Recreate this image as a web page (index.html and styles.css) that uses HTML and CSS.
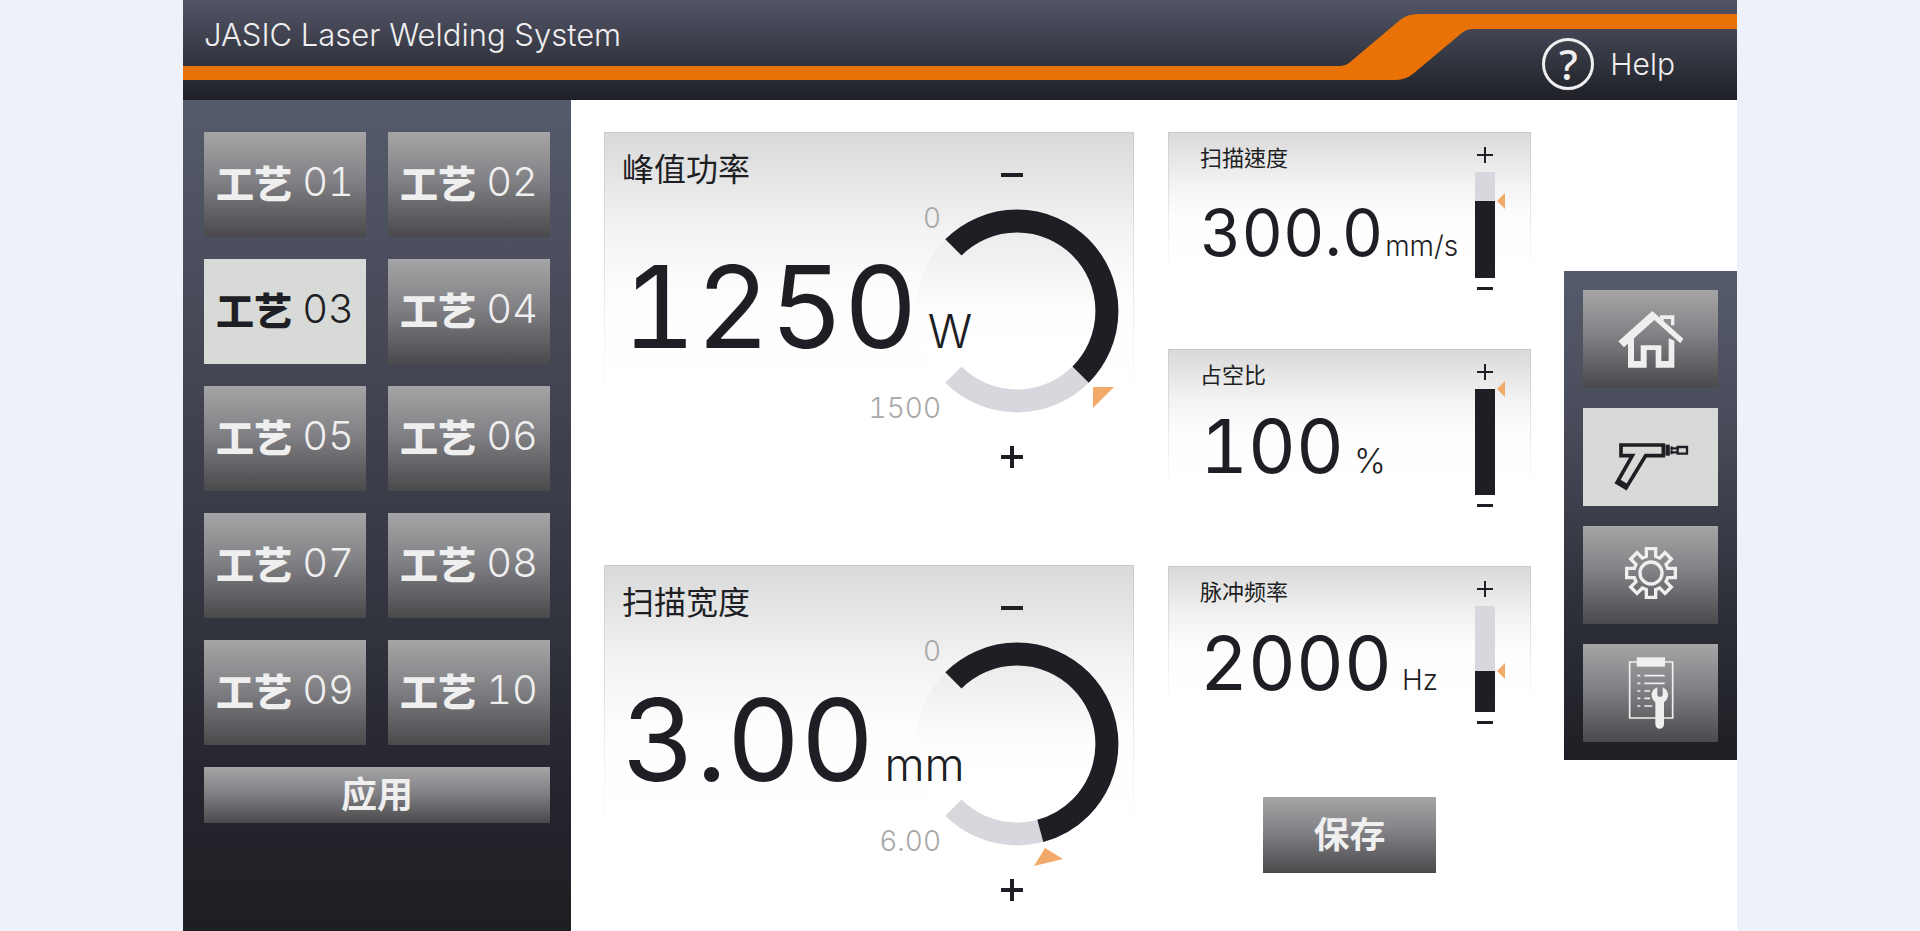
FILE: index.html
```html
<!DOCTYPE html>
<html lang="zh-CN">
<head>
    <meta charset="UTF-8">
    <title>JASIC Laser Welding System</title>
    <link rel="stylesheet" href="styles.css">
</head>
<body>
    <div class="screen">
        <header class="header">
            <svg class="ribbon" viewBox="0 0 1554 100" preserveAspectRatio="xMaxYMid slice" aria-hidden="true">
                <path d="M0 66H1158Q1162 66 1166 63L1217 20Q1224 14 1235 14H1554V29H1289Q1284 29 1280 32L1231 73Q1223 80 1213 80H0Z" fill="#e87205"/>
            </svg>
            <h1>JASIC Laser Welding System</h1>
            <a class="help" href="#help"><span class="help-icon">?</span>Help</a>
        </header>

        <div class="content">
            <aside class="sidebar">
                <button class="btn process">工艺 <span>01</span></button>
                <button class="btn process">工艺 <span>02</span></button>
                <button class="btn process active">工艺 <span>03</span></button>
                <button class="btn process">工艺 <span>04</span></button>
                <button class="btn process">工艺 <span>05</span></button>
                <button class="btn process">工艺 <span>06</span></button>
                <button class="btn process">工艺 <span>07</span></button>
                <button class="btn process">工艺 <span>08</span></button>
                <button class="btn process">工艺 <span>09</span></button>
                <button class="btn process">工艺 <span>10</span></button>
                <button class="btn apply">应用</button>
            </aside>

            <main class="params">
                <div class="column large">
                    <section class="card card-large">
                        <div class="info">
                            <h2>峰值功率</h2>
                            <p class="value">1250<span class="unit">W</span></p>
                        </div>
                        <div class="gauge">
                            <button class="step" aria-label="减少峰值功率"><i class="minus"></i></button>
                            <svg class="dial" viewBox="-115 -112 220 234">
                                <defs>
                                    <linearGradient id="dialFill" x1="0" y1="0" x2="0" y2="1">
                                        <stop offset="0" stop-color="#e6e6e6"/>
                                        <stop offset="0.5" stop-color="#fdfdfd"/>
                                        <stop offset="0.7" stop-color="#fff"/>
                                    </linearGradient>
                                </defs>
                                <circle r="101" fill="url(#dialFill)"/>
                                <path class="track" d="M63.6 63.6A90 90 0 0 1 -63.6 63.6"/>
                                <path class="fill" d="M-63.6 -63.6A90 90 0 0 1 63.6 -63.6A90 90 0 0 1 63.6 63.6"/>
                                <path class="mark" d="M76 76H97L76 97Z"/>
                                <text x="-76" y="-83">0</text>
                                <text x="-76" y="107">1500</text>
                            </svg>
                            <button class="step" aria-label="增加峰值功率"><i class="plus"></i></button>
                        </div>
                    </section>

                    <section class="card card-large">
                        <div class="info">
                            <h2>扫描宽度</h2>
                            <p class="value">3.00<span class="unit">mm</span></p>
                        </div>
                        <div class="gauge">
                            <button class="step" aria-label="减少扫描宽度"><i class="minus"></i></button>
                            <svg class="dial" viewBox="-115 -112 220 234">
                                <circle r="101" fill="url(#dialFill)"/>
                                <path class="track" d="M63.6 63.6A90 90 0 0 1 -63.6 63.6"/>
                                <path class="fill" d="M-63.6 -63.6A90 90 0 0 1 63.6 -63.6A90 90 0 0 1 63.6 63.6A90 90 0 0 1 23.3 86.9"/>
                                <path class="mark" d="M28 104L46 115L17 122Z"/>
                                <text x="-76" y="-83">0</text>
                                <text x="-76" y="107">6.00</text>
                            </svg>
                            <button class="step" aria-label="增加扫描宽度"><i class="plus"></i></button>
                        </div>
                    </section>
                </div>

                <div class="column small">
                    <section class="card card-small">
                        <div class="info">
                            <h2 lang="zh-Hant"><label for="speed">扫描速度</label></h2>
                            <p class="value compact">300.0<span class="unit">mm/s</span></p>
                        </div>
                        <div class="slider">
                            <button class="step" aria-label="增加扫描速度"><i class="plus"></i></button>
                            <div class="bar" style="--level: 73%">
                                <input type="range" id="speed" min="0" max="100" value="73">
                                <i class="pointer"></i>
                            </div>
                            <button class="step" aria-label="减少扫描速度"><i class="minus"></i></button>
                        </div>
                    </section>

                    <section class="card card-small">
                        <div class="info">
                            <h2><label for="duty">占空比</label></h2>
                            <p class="value">100<span class="unit percent">%</span></p>
                        </div>
                        <div class="slider">
                            <button class="step" aria-label="增加占空比"><i class="plus"></i></button>
                            <div class="bar" style="--level: 100%">
                                <input type="range" id="duty" min="0" max="100" value="100">
                                <i class="pointer"></i>
                            </div>
                            <button class="step" aria-label="减少占空比"><i class="minus"></i></button>
                        </div>
                    </section>

                    <section class="card card-small">
                        <div class="info">
                            <h2><label for="freq">脉冲频率</label></h2>
                            <p class="value">2000<span class="unit">Hz</span></p>
                        </div>
                        <div class="slider">
                            <button class="step" aria-label="增加脉冲频率"><i class="plus"></i></button>
                            <div class="bar" style="--level: 39%">
                                <input type="range" id="freq" min="0" max="100" value="39">
                                <i class="pointer"></i>
                            </div>
                            <button class="step" aria-label="减少脉冲频率"><i class="minus"></i></button>
                        </div>
                    </section>

                    <button class="btn save">保存</button>
                </div>
            </main>

            <nav class="nav">
                <a class="btn" href="#home" aria-label="主页">
                    <svg viewBox="0 0 210 210" fill="currentColor">
                        <path d="M109 21L202 104L193 118L115 48L24 130L7 112Z"/>
                        <path d="M36 108L54 92V171H74V124H136V171H158V103L175 110V191H119V138H92V191H36Z"/>
                        <path d="M132 34H175V64H165V45H143V52L132 43Z"/>
                    </svg>
                </a>
                <a class="btn active" href="#gun" aria-label="焊枪">
                    <svg viewBox="0 0 210 210" fill="none" stroke="currentColor" stroke-width="11">
                        <path d="M15 69H142V101H89L30 198L3 182L49 101H15Z"/>
                        <path d="M6 178L34 195" stroke-width="16"/>
                        <path d="M155 68V101" stroke-width="13"/>
                        <path d="M163 79H184M163 91H184" stroke-width="7"/>
                        <path d="M167 73V97" stroke-width="5"/>
                        <path d="M185 75H213V95H185Z" stroke-width="7"/>
                    </svg>
                </a>
                <a class="btn" href="#settings" aria-label="设置">
                    <svg viewBox="0 0 210 210" fill="none" stroke="currentColor" stroke-width="10">
                        <g transform="translate(105 99)">
                            <circle r="33"/>
                            <path d="M-14 -73H14V-50L26 -45L42 -61L61 -42L45 -26L50 -14H73V14H50L45 26L61 42L42 61L26 45L14 50V73H-14V50L-26 45L-42 61L-61 42L-45 26L-50 14H-73V-14H-50L-45 -26L-61 -42L-42 -61L-26 -45L-14 -50Z"/>
                        </g>
                    </svg>
                </a>
                <a class="btn" href="#service" aria-label="维护">
                    <svg viewBox="0 0 210 210" fill="none" stroke="currentColor" stroke-width="5">
                        <path d="M41 12H170V180H41Z"/>
                        <path d="M62 -2H147V26H62Z" fill="currentColor" stroke="none"/>
                        <path d="M64 53H73M85 53H146M64 76H73M85 76H146M64 99H73M85 99H102M64 121H73M85 121H102M64 144H73M85 144H109"/>
                        <path d="M124 88C112 93 107 102 107 111C107 120 111 127 118 133V199A13 13 0 0 0 144 199V133C152 127 156 120 156 111C156 102 151 93 140 88V112L136 116H128L124 112Z" fill="currentColor" stroke="none"/>
                    </svg>
                </a>
            </nav>
        </div>
    </div>
</body>
</html>
```
FILE: styles.css
```css
* {
    box-sizing: border-box;
}

body {
    margin: 0;
    background-color: #edf1fa;
    color: #1e1f24;
    font-family: Inter, "Noto Sans CJK SC", sans-serif;
}

h1, h2, p {
    margin: 0;
    font-weight: 400;
}

button {
    padding: 0;
    border: none;
    background: none;
    color: inherit;
    font-family: inherit;
    cursor: pointer;
}

.screen {
    display: flex;
    flex-direction: column;
    max-width: 1554px;
    min-height: 100vh;
    margin: 0 auto;
    background-color: #fff;
}

/* header */
.header {
    position: relative;
    display: flex;
    justify-content: space-between;
    height: 100px;
    padding: 0 62px 0 21px;
    background: linear-gradient(#525567, #30323c 66%, #1f2027);
    color: #efefef;
}

.ribbon {
    position: absolute;
    top: 0;
    left: 0;
    width: 100%;
    height: 100px;
}

.header h1 {
    position: relative;
    font-size: 31px;
    font-weight: 300;
    line-height: 70px;
}

.help {
    position: relative;
    display: flex;
    align-items: center;
    gap: 16px;
    padding-top: 28px;
    color: inherit;
    font-size: 30px;
    font-weight: 300;
    line-height: 36px;
    text-decoration: none;
}

.help-icon {
    width: 52px;
    height: 52px;
    border: 3px solid #efefef;
    border-radius: 50%;
    font-family: "Noto Sans", sans-serif;
    font-size: 42px;
    font-weight: 500;
    line-height: 46px;
    text-align: center;
}

.content {
    display: grid;
    grid-template-columns: 388px 1fr 173px;
    flex: 1;
}

/* buttons */
.btn {
    display: flex;
    align-items: center;
    justify-content: center;
    background: linear-gradient(#a5a5a7, #828185 45%, #4a4a4d);
    color: #efefef;
    font-size: 36px;
    font-weight: 700;
}

button.btn {
    padding-bottom: 6px;
}

.btn.active {
    background: #d8dad7;
    color: #1e1f24;
}

/* left panel */
.sidebar {
    display: grid;
    grid-template-columns: 1fr 1fr;
    grid-auto-rows: 105px;
    align-content: start;
    gap: 22px;
    padding: 32px 21px;
    background: linear-gradient(#555b6b, #4a4c5b 22%, #30323c 65%, #25252f 82%, #1e1f22);
}

.process {
    gap: 10px;
    font-size: 38px;
    font-weight: 900;
}

.process span {
    font-size: 40px;
    font-weight: 300;
    font-variant-numeric: tabular-nums;
}

.apply {
    grid-column: 1 / 3;
    height: 56px;
}

/* parameters */
.params {
    display: grid;
    grid-template-columns: 530fr 363fr;
    align-items: start;
    column-gap: 34px;
    padding: 32px 33px 0;
}

.column {
    display: flex;
    flex-direction: column;
}

.large {
    gap: 84px;
}

.small {
    gap: 51px;
}

.card {
    --edge: linear-gradient(#c9caca, #fff);
    display: grid;
    background:
        linear-gradient(#c9caca, #c9caca) top / 100% 1px,
        var(--edge) left top / 1px var(--fade),
        var(--edge) right top / 1px var(--fade),
        linear-gradient(#d9d9d9, #f2f2f2 35%, #fdfdfd 60%, #fff) top / 100% var(--fade);
    background-repeat: no-repeat;
}

.card-large {
    --fade: 268px;
}

.card-small {
    --fade: 140px;
    grid-template-columns: 1fr auto;
}

.card-large .info,
.card-large .gauge {
    grid-area: 1 / 1;
}

.card-large .info {
    z-index: 1;
    justify-self: start;
    padding: 21px 0 0 18px;
}

.card-small .info {
    padding: 14px 0 0 32px;
}

.card h2 {
    font-size: 32px;
    line-height: 34px;
}

.card-small h2 {
    height: 24px;
    font-size: 22px;
    line-height: 24px;
}

h2:lang(zh-Hant) {
    font-family: Inter, "Noto Sans CJK TC", sans-serif;
}

.value {
    display: flex;
    align-items: baseline;
    gap: 10px;
    margin-top: 64px;
    font-size: 114px;
    line-height: 112px;
    font-variant-numeric: tabular-nums;
}

.unit {
    font-size: 46px;
    font-weight: 300;
    line-height: 1;
}

.card-small .value {
    margin-top: 19px;
    font-size: 74px;
    line-height: 80px;
}

.card-small .compact {
    gap: 2px;
    font-size: 64px;
    line-height: 88px;
}

.card-small .unit {
    font-size: 28px;
}

.card-small .percent {
    font-size: 34px;
}

.gauge {
    display: flex;
    flex-direction: column;
    align-items: center;
    justify-self: end;
    padding: 19px 12px 0 0;
}

.dial {
    display: block;
    width: 220px;
    height: 234px;
    overflow: visible;
}

.dial text {
    fill: #a8a8a8;
    font-size: 28px;
    font-weight: 300;
    text-anchor: end;
    font-variant-numeric: tabular-nums;
}

.track,
.fill {
    fill: none;
    stroke: #d8d7dd;
    stroke-width: 23px;
}

.fill {
    stroke: #1e1f24;
}

.mark {
    fill: #f1aa6a;
}

/* plus and minus */
.step {
    display: grid;
    place-items: center;
    width: 48px;
    height: 48px;
}

.minus,
.plus {
    width: 22px;
    height: 22px;
    background:
        linear-gradient(#1e1f24, #1e1f24) center / 100% 4px no-repeat;
}

.plus {
    background:
        linear-gradient(#1e1f24, #1e1f24) center / 100% 4px no-repeat,
        linear-gradient(#1e1f24, #1e1f24) center / 4px 100% no-repeat;
}

.slider {
    display: flex;
    flex-direction: column;
    align-items: center;
    padding: 13px 22px 0 0;
}

.slider .step {
    height: 20px;
}

.slider .minus,
.slider .plus {
    width: 16px;
    height: 16px;
    background-size: 100% 3px, 2px 100%;
}

.slider .plus {
    background-size: 100% 2px, 2px 100%;
}

.bar {
    position: relative;
    width: 20px;
    height: 106px;
    margin-top: 7px;
}

.bar input {
    display: block;
    width: 100%;
    height: 100%;
    margin: 0;
    appearance: none;
    writing-mode: vertical-lr;
    direction: rtl;
    background: linear-gradient(to top, #1e1f24 var(--level), #d8d7dd var(--level));
}

.bar input::-webkit-slider-thumb {
    appearance: none;
    width: 20px;
    height: 1px;
}

.pointer {
    position: absolute;
    left: 22px;
    bottom: var(--level);
    margin-bottom: -8px;
    border: 8px solid transparent;
    border-right-color: #f1aa6a;
    border-left-width: 0;
}

.save {
    align-self: center;
    width: 173px;
    height: 76px;
    margin-top: 14px;
}

/* right navigation */
.nav {
    display: flex;
    flex-direction: column;
    align-self: start;
    gap: 20px;
    margin-top: 171px;
    padding: 19px 19px 18px;
    background: linear-gradient(#555b6b, #4a4c5b 30%, #30323c 65%, #1e1f24);
}

.nav .btn {
    height: 98px;
}

.nav svg {
    width: 70px;
    height: 70px;
    overflow: visible;
}
```
